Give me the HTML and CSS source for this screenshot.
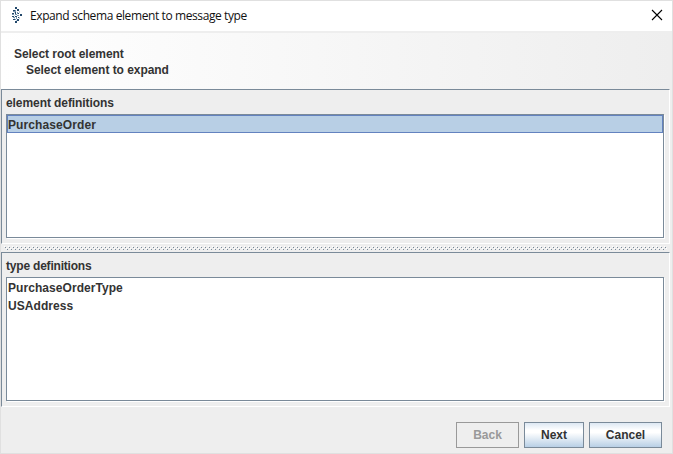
FILE: index.html
```html
<!DOCTYPE html>
<html lang="en">
<head>
<meta charset="utf-8">
<title>Expand schema element to message type</title>
<link rel="stylesheet" href="styles.css">
</head>
<body>
<div class="window">
  <header class="titlebar">
    <svg class="logo" width="10" height="17" viewBox="0 0 10 17" shape-rendering="crispEdges">
      <path fill="#23486b" d="M3 0h2v2H3zM1 3h2v1H1zM5 2h2v2H5zM0 6h2v1H0zM3 5h1v2H3zM6 6h1v1H6zM8 7h2v2H8zM0 9h2v1H0zM3 9h2v1H3zM6 10h1v1H6zM1 12h2v1H1zM5 12h2v2H5zM3 14h2v2H3z"/>
      <path fill="#7795ad" d="M3 3h1v2H3zM1 4h2v1H1zM5 5h1v2H5zM0 7h2v1H0zM3 7h2v1H3zM6 8h1v1H6zM5 8h1v1H5zM1 10h2v1H1zM4 10h1v2H4zM3 12h1v1H3z"/>
      <path fill="#c3d2de" d="M7 4h1v2H7zM2 5h1v1H2zM2 8h1v1H2zM7 10h1v2H7zM2 11h1v1H2zM4 13h1v1H4z"/>
    </svg>
    <h1 class="title">Expand schema element to message type</h1>
    <svg class="close" width="12" height="12" viewBox="0 0 12 12"><path d="M1 1l10 10M11 1L1 11" stroke="#000" stroke-width="1.1" fill="none"/></svg>
  </header>
  <section class="banner">
    <p class="step">Select root element</p>
    <p class="hint">Select element to expand</p>
  </section>
  <main class="split">
    <section class="panel">
      <h2 class="label elements">element definitions</h2>
      <ul class="list"><li class="item selected">PurchaseOrder</li></ul>
    </section>
    <div class="divider"><div class="grip"></div></div>
    <section class="panel">
      <h2 class="label types">type definitions</h2>
      <ul class="list"><li class="item">PurchaseOrderType</li><li class="item">USAddress</li></ul>
    </section>
  </main>
  <footer class="actions">
    <button class="btn back" disabled>Back</button>
    <button class="btn next">Next</button>
    <button class="btn cancel">Cancel</button>
  </footer>
</div>
</body>
</html>
```
FILE: styles.css
```css
* { box-sizing: border-box; margin: 0; padding: 0; }
body { width: 673px; height: 454px; overflow: hidden; }
.window {
  width: 673px; height: 454px;
  border: 1px solid #e0e0e0;
  background: #eee;
  display: flex; flex-direction: column;
  font: bold 12px/18px "Liberation Sans", Arial, sans-serif;
  color: #333;
}
.titlebar {
  height: 30px; background: #fff;
  display: flex; align-items: center;
  padding: 0 9px 0 11px;
}
.logo { flex: none; margin-top: -1px; }
.title {
  flex: 1; margin-left: 8px;
  font: 12px/18px "Open Sans", "Noto Sans", sans-serif;
  letter-spacing: -0.4px;
  color: #111;
}
.close { flex: none; margin-top: -2px; }
.banner {
  height: 58px; border-top: 2px solid #eee;
  background: linear-gradient(90deg, #fff 0, #eee 100%);
  padding: 13px 13px 0; line-height: 16px;
  letter-spacing: -0.05px;
}
.hint { padding-left: 12px; }
.split { width: 669px; display: flex; flex-direction: column; }
.panel {
  height: 155px;
  border: 1px solid #7a8a99;
  border-right-color: #fff; border-bottom-color: #fff;
  padding: 4px 5px 0 4px;
}
.label { font-size: 12px; line-height: 18px; height: 20px; }
.elements { letter-spacing: -0.08px; }
.types { letter-spacing: -0.2px; }
.list {
  height: 124px; list-style: none; background: #fff;
  border: 1px solid #7a8a99;
  box-shadow: 1px 1px #fff;
}
.item { height: 18px; line-height: 18px; padding: 1px 0 0 1px; letter-spacing: 0.06px; }
.selected {
  line-height: 16px;
  border: 1px solid #6382bf; background: #b8cfe5;
  padding-left: 0;
  letter-spacing: 0.1px;
}
.divider { height: 8px; padding: 2px 3px 2px 3px; }
.grip {
  height: 4px;
  background:
    conic-gradient(from 0deg at 1px 1px, transparent 75%, #fff 0) 0 0 / 4px 4px,
    conic-gradient(from 0deg at 1px 1px, transparent 75%, #7a8a99 0) 1px 1px / 4px 4px,
    conic-gradient(from 0deg at 1px 1px, transparent 75%, #fff 0) 2px 2px / 4px 4px,
    conic-gradient(from 0deg at 1px 1px, transparent 75%, #7a8a99 0) 3px 3px / 4px 4px;
}
.actions { display: flex; justify-content: flex-end; gap: 5px; padding: 15px 10px 0; }
.btn {
  height: 26px; border: 1px solid #7a8a99;
  font: inherit; color: #333;
  background: linear-gradient(#dde8f3 0, #fff 30%, #fff 40%, #b8cfe5 100%);
}
.back { width: 63px; background: #eee; border-color: #999; color: #999; }
.next { width: 60px; }
.cancel { width: 73px; }
```
